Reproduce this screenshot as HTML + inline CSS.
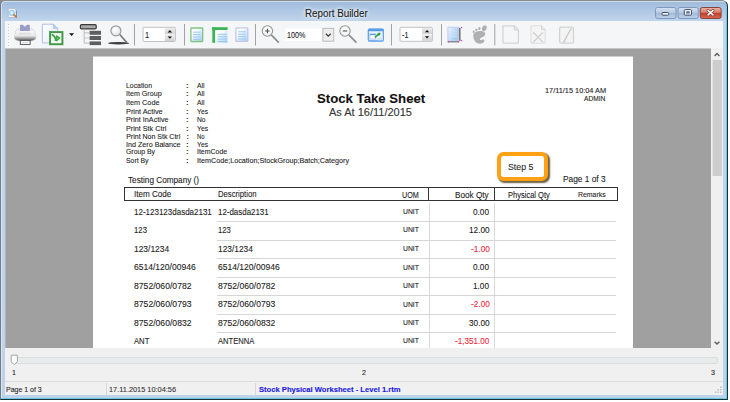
<!DOCTYPE html>
<html><head><meta charset="utf-8">
<style>
*{margin:0;padding:0;box-sizing:border-box}
html,body{width:730px;height:402px;overflow:hidden;background:#fff}
#corner{left:0;top:0;width:6px;height:6px;background:#8c8c8c}
body{font-family:"Liberation Sans",sans-serif;position:relative}
.abs{position:absolute}
.t{-webkit-text-stroke:.1px currentColor;position:absolute;white-space:nowrap;transform-origin:0 50%;line-height:1}
.tr{position:absolute;white-space:nowrap;transform-origin:100% 50%;line-height:1;text-align:right}
#win{left:0;top:0;width:728px;height:400px;background:linear-gradient(#9fbbdb 0,#a9c3e0 6px,#c1d6ed 21px,#bdd3ec 100%);border-radius:5px 6px 0 0;border:1px solid #8c8c8c;border-left-color:#767c7e;border-right-color:#1a343c;border-bottom-color:#1a343c;box-shadow:inset -1px -1px 0 #6cc4de,inset 1px 1px 0 rgba(235,245,255,.6)}
#client{left:5px;top:21px;width:718px;height:374px;background:#f0f0f0}
#toolbar{left:5px;top:21px;width:718px;height:27px;background:#f5f6f7}
#gray{left:5px;top:48px;width:706px;height:300px;background:#a0a0a0}
#paper{left:93px;top:56px;width:540px;height:292px;background:#fff}
#vscroll{left:711px;top:48px;width:12px;height:300px;background:#f0f0f0}
.hl{left:217px;width:399px;height:1px;background:#d6d6d6}
</style></head><body>
<div id="corner" class="abs"></div><div id="win" class="abs"></div>
<div id="client" class="abs"></div>
<div id="toolbar" class="abs"></div>
<div id="gray" class="abs"></div>
<div id="paper" class="abs"></div>
<div id="vscroll" class="abs"></div>
<div class="abs" style="left:5px;top:48px;width:706px;height:1px;background:#c6c6c7"></div>
<div class="abs" style="left:93px;top:56px;width:540px;height:1px;background:#cfcfcf"></div>
<div class="abs" style="left:5px;top:49px;width:1px;height:299px;background:#abb6c2"></div>
<!-- table header box -->
<div class="abs" style="left:124.4px;top:187px;width:493.7px;height:13.5px;border:1.2px solid #333"></div>
<div class="abs" style="left:427.9px;top:187.5px;width:1.2px;height:12.6px;background:#383838"></div>
<div class="abs" style="left:493.9px;top:187.5px;width:1.2px;height:12.6px;background:#383838"></div>
<!-- body vertical lines -->
<div class="abs" style="left:429px;top:203px;width:1px;height:145px;background:#dadada"></div>
<div class="abs" style="left:494px;top:203px;width:1px;height:145px;background:#dadada"></div>
<!-- row lines -->
<div class="abs hl" style="top:221px"></div>
<div class="abs hl" style="top:239.5px"></div>
<div class="abs hl" style="top:258px"></div>
<div class="abs hl" style="top:276.5px"></div>
<div class="abs hl" style="top:295px"></div>
<div class="abs hl" style="top:313.5px"></div>
<div class="abs hl" style="top:332px"></div>
<!-- callout -->
<div class="abs" style="left:496.5px;top:151.8px;width:51px;height:29px;border:4.4px solid #ffa112;border-radius:6.5px;background:#fff;box-shadow:1.3px 1.6px 1.6px rgba(70,55,20,.8)"></div>

<svg class="abs" style="left:0;top:0" width="730" height="402" viewBox="0 0 730 402">
<defs>
<linearGradient id="gPg" x1="0" y1="0" x2="1" y2="1"><stop offset="0" stop-color="#ffffff"/><stop offset=".3" stop-color="#ffffff"/><stop offset="1" stop-color="#a4cdf3"/></linearGradient>
<linearGradient id="gDoc" x1="0" y1="0" x2="1" y2="1"><stop offset="0" stop-color="#ffffff"/><stop offset="1" stop-color="#e6eefb"/></linearGradient>
<linearGradient id="gPr" x1="0" y1="0" x2="0" y2="1"><stop offset="0" stop-color="#e2e2e2"/><stop offset=".2" stop-color="#f5f5f5"/><stop offset=".55" stop-color="#e9e9e9"/><stop offset=".66" stop-color="#c6c6c6"/><stop offset=".88" stop-color="#727272"/><stop offset="1" stop-color="#4a4a4a"/></linearGradient>
<radialGradient id="gLens" cx=".4" cy=".35" r=".7"><stop offset="0" stop-color="#ffffff"/><stop offset="1" stop-color="#e2e2e2"/></radialGradient>
<linearGradient id="gBtn" x1="0" y1="0" x2="0" y2="1"><stop offset="0" stop-color="#d6e2f2"/><stop offset=".45" stop-color="#b7cbe4"/><stop offset=".5" stop-color="#a0b9d8"/><stop offset="1" stop-color="#bed2ea"/></linearGradient>
<linearGradient id="gCls" x1="0" y1="0" x2="0" y2="1"><stop offset="0" stop-color="#efb4a6"/><stop offset=".45" stop-color="#d97a66"/><stop offset=".5" stop-color="#c33c24"/><stop offset="1" stop-color="#da6a52"/></linearGradient>
<linearGradient id="gSp" x1="0" y1="0" x2="0" y2="1"><stop offset="0" stop-color="#ececec"/><stop offset="1" stop-color="#d2d2d2"/></linearGradient>
<linearGradient id="gPm" x1="0" y1="0" x2="1" y2=".6"><stop offset="0" stop-color="#eef5fd"/><stop offset="1" stop-color="#9fcbf2"/></linearGradient>
</defs>
<!-- title icon -->
<g id="ticon">
<path d="M8.3,8.4 H14.2 L16.3,10.5 V17.5 H8.3 Z" fill="#f1f3fa" stroke="#a8b4cc" stroke-width=".7"/>
<line x1="16.4" y1="10.6" x2="16.4" y2="17.2" stroke="#6e7da6" stroke-width=".9"/>
<circle cx="11.8" cy="12.9" r="2.7" fill="#b9e0fb" stroke="#86b6e2" stroke-width=".7"/>
<circle cx="11.5" cy="12.6" r="1.2" fill="#e4f4fe"/>
<line x1="13.9" y1="14.9" x2="16.1" y2="16.9" stroke="#c2803a" stroke-width="1.9" stroke-linecap="round"/>
</g>
<!-- window buttons -->
<rect x="655.5" y="7.5" width="20.5" height="11" rx="2" fill="url(#gBtn)" stroke="#8098bc" stroke-width="1"/>
<rect x="661.9" y="12.5" width="6.8" height="2.7" rx="1" fill="#f4f6fa" stroke="#3f4d68" stroke-width="1"/>
<rect x="678" y="7.5" width="20.3" height="11" rx="2" fill="url(#gBtn)" stroke="#8098bc" stroke-width="1"/>
<rect x="684.3" y="9.6" width="7.2" height="5.5" rx="1" fill="#f8fafc" stroke="#3f4d68" stroke-width="1"/>
<rect x="686.2" y="11.3" width="3.5" height="2.2" fill="#506a98"/>
<rect x="700.3" y="7.5" width="20.8" height="11" rx="2" fill="url(#gCls)" stroke="#84453c" stroke-width="1"/>
<g stroke-linecap="round"><path d="M708,10.5 L713,14.8 M713,10.5 L708,14.8" stroke="#6a3a36" stroke-width="2.8"/><path d="M708,10.5 L713,14.8 M713,10.5 L708,14.8" stroke="#fff" stroke-width="1.6"/></g>

<!-- toolbar grip -->
<line x1="8.5" y1="24" x2="8.5" y2="47" stroke="#cdcdcd" stroke-width="1" stroke-dasharray="1 2"/>
<!-- printer -->
<g id="printer">
<path d="M15,33.2 C15,30 18,28.6 21,28.6 H29.2 C32.2,28.6 35.3,30 35.3,33.2 L35.9,37.6 C35.9,40.1 33,41.3 25.2,41.3 C17.4,41.3 14.4,40.1 14.4,37.6 Z" fill="url(#gPr)" stroke="#c8c8c8" stroke-width=".5"/>
<path d="M20,31 V25.5 Q20,24.7 20.8,24.7 H22.8 L24.9,26.7 L27,24.7 H29 Q29.8,24.7 29.8,25.5 V31 Z" fill="#9c9cca"/>
<rect x="19" y="32.8" width="12.2" height="1.7" rx=".8" fill="#dedede"/>
<rect x="20.3" y="40.4" width="9.8" height="4" fill="#fdfdfd" stroke="#4c4c4c" stroke-width=".9"/>
<rect x="21.8" y="41.9" width="6.8" height=".9" fill="#d8d8d8"/>
</g>
<!-- doc + green -->
<g id="docg">
<path d="M42.4,24.2 H53.3 L57.8,28.6 V43 H42.4 Z" fill="url(#gDoc)" stroke="#b2bbe8" stroke-width="1"/>
<path d="M53.3,24.2 V28.6 H57.8 Z" fill="#a9d8f5" stroke="#a9b6e2" stroke-width=".6"/>
<rect x="50.1" y="32.1" width="12.3" height="12.1" fill="#f6fbf6" stroke="#459a47" stroke-width="2"/>
<path d="M52.4,34.9 Q54.6,36 55.7,38.8" fill="none" stroke="#3da447" stroke-width="1.9" stroke-linecap="round"/>
<path d="M56.4,35 L60.8,38.1 L56.7,41.5 L54.4,40.5 L55.4,38.3 Z" fill="#3aa545"/>
<circle cx="57.7" cy="38.3" r=".9" fill="#6ed56e"/>
</g>
<path d="M69.1,33.2 H74.1 L71.6,35.9 Z" fill="#111"/>
<!-- tree -->
<g id="tree">
<rect x="80.4" y="24.6" width="15.8" height="4.3" rx="1.2" fill="#a9a9a9" stroke="#3a3a3a" stroke-width="1.2"/>
<path d="M84.2,29.5 V43.4 M84.2,32.8 H89.5 M84.2,38 H89.5 M84.2,43.2 H89.5" stroke="#c6c6c6" stroke-width="1.2" fill="none"/>
<rect x="89.6" y="30.8" width="11.4" height="4" fill="#5e5e5e"/>
<rect x="89.6" y="36" width="11.4" height="4" fill="#5e5e5e"/>
<rect x="89.6" y="41.4" width="11.4" height="3.7" fill="#5e5e5e"/>
</g>
<!-- find magnifier -->
<g id="find">
<ellipse cx="118.6" cy="43.2" rx="10.6" ry="1.3" fill="#3e3e3e"/>
<line x1="119.8" y1="34.5" x2="126.8" y2="42.6" stroke="#7c7c7c" stroke-width="1.7"/>
<circle cx="115.9" cy="30.8" r="5" fill="url(#gLens)" stroke="#9c9c9c" stroke-width="1.2"/>
</g>
<!-- separators -->
<g fill="#a2a2a2">
<rect x="134" y="24" width="1" height="21.5"/><rect x="184" y="24" width="1" height="21.5"/><rect x="255" y="24" width="1" height="21.5"/>
<rect x="391" y="24" width="1" height="21.5"/><rect x="441" y="24" width="1" height="21.5"/><rect x="494.3" y="24" width="1" height="21.5"/>
</g>
<!-- spin 1 -->
<g id="spin1">
<rect x="143" y="27.3" width="32.4" height="14.2" rx="1" fill="#fff" stroke="#c2c2c2" stroke-width="1"/>
<rect x="164.8" y="28" width="10" height="6.3" fill="url(#gSp)"/><rect x="164.8" y="34.8" width="10" height="6.2" fill="url(#gSp)"/>
<path d="M167.7,32.4 H172 L169.85,30.1 Z M167.7,36.4 H172 L169.85,38.7 Z" fill="#111"/>
</g>
<!-- page icons -->
<g id="pg1">
<rect x="190.9" y="28" width="11.8" height="13.5" rx=".7" fill="url(#gPg)" stroke="#7cc47f" stroke-width="1.3"/>
<path d="M193,32.2 H200.7 M193,34.6 H200.7 M193,37 H200.7 M193,39.4 H200.7" stroke="#9cc9f2" stroke-width="1"/>
</g>
<g id="pg2">
<rect x="212.3" y="27.2" width="15.3" height="3" fill="#3db556"/><rect x="212.3" y="27.2" width="3" height="15.6" fill="#3db556"/>
<rect x="215.3" y="30.2" width="12.3" height="12.6" fill="url(#gPg)"/>
<path d="M217.5,34.3 H226.7 M217.5,36.7 H226.7 M217.5,39.1 H226.7 M217.5,41.5 H226.7" stroke="#9cc9f2" stroke-width="1"/>
</g>
<g id="pg3">
<rect x="235.9" y="27.8" width="11.9" height="13.6" rx=".7" fill="url(#gPg)" stroke="#c3c7ea" stroke-width="1.3"/>
<path d="M238,31.8 H245.8 M238,34.2 H245.8 M238,36.6 H245.8 M238,39 H245.8" stroke="#9cc9f2" stroke-width="1"/>
</g>
<!-- zoom in -->
<g id="zin">
<line x1="271.2" y1="34.9" x2="278.8" y2="42.6" stroke="#8e8e8e" stroke-width="1.65"/>
<circle cx="267.4" cy="31" r="5.2" fill="#f8f8f8" stroke="#959595" stroke-width="1.1"/>
<path d="M265.2,31 H269.6 M267.4,28.8 V33.2" stroke="#505050" stroke-width="1.05"/>
</g>
<!-- combo -->
<rect x="285.3" y="28.4" width="37.6" height="12.6" fill="#fff"/>
<rect x="322.9" y="28.4" width="10.8" height="12.8" fill="#ededed" stroke="#bcbcbc" stroke-width="1"/>
<path d="M325.9,33.8 L328.3,36.2 L330.7,33.8" fill="none" stroke="#3c3c3c" stroke-width="1.25"/>
<!-- zoom out -->
<g id="zout">
<line x1="348.9" y1="34.9" x2="356.4" y2="42.6" stroke="#8e8e8e" stroke-width="1.65"/>
<circle cx="345" cy="31" r="5.2" fill="#f8f8f8" stroke="#959595" stroke-width="1.1"/>
<path d="M342.8,31 H347.2" stroke="#666" stroke-width="1.2"/>
</g>
<!-- blue window icon -->
<g id="bwin">
<rect x="368.3" y="29.2" width="15" height="12" rx="1.4" fill="#eaf2fc" stroke="#5a9ce8" stroke-width="1.2"/>
<rect x="367.9" y="28.8" width="15.8" height="2.4" rx="1" fill="#5a9ce8"/>
<rect x="368.3" y="40" width="15" height="1.6" fill="#7db2ee"/>
<rect x="377.2" y="37.6" width="5.6" height="2.6" fill="#d3e4f9"/>
<rect x="370" y="34.2" width="5.8" height="4.8" fill="#fff" stroke="#8cbaf0" stroke-width=".7"/>
<rect x="369.7" y="33.8" width="6.4" height="1.3" fill="#5a9ce8"/>
<line x1="374.8" y1="37.4" x2="378.4" y2="34.4" stroke="#2fa53a" stroke-width="1.5"/>
<ellipse cx="379" cy="34" rx="1.6" ry="1.4" fill="#2fa53a" transform="rotate(-40 379 34)"/>
</g>
<!-- spin 2 -->
<g id="spin2">
<rect x="400" y="27.3" width="32.4" height="14" rx="1" fill="#fff" stroke="#c2c2c2" stroke-width="1"/>
<rect x="422" y="28" width="10" height="6.2" fill="url(#gSp)"/><rect x="422" y="34.7" width="10" height="6.1" fill="url(#gSp)"/>
<path d="M424.9,32.3 H429.2 L427.05,30 Z M424.9,36.3 H429.2 L427.05,38.6 Z" fill="#111"/>
</g>
<!-- page measure icon -->
<g id="pmeas">
<rect x="447.9" y="27.3" width="10.2" height="13.8" fill="url(#gPm)" stroke="#c6caee" stroke-width="1"/>
<path d="M449.5,31.5 H457 M449.5,34 H457 M449.5,36.5 H457" stroke="#cfe4f8" stroke-width=".8"/>
<rect x="458.8" y="27.8" width="1.8" height="13" fill="#787878"/>
<rect x="448" y="41.2" width="10.8" height="1.2" fill="#787878"/>
<rect x="460.9" y="26.9" width="1.3" height="1.3" fill="#d23fd2"/><rect x="460.9" y="39.9" width="1.3" height="1.3" fill="#d23fd2"/><rect x="447.6" y="41.1" width="1.3" height="1.3" fill="#d23fd2"/><rect x="458" y="41.1" width="1.3" height="1.3" fill="#d23fd2"/>
</g>
<!-- foot -->
<g id="foot" fill="#b0b0b0">
<ellipse cx="484.3" cy="28.2" rx="2.2" ry="3" transform="rotate(28 484.3 28.2)"/>
<ellipse cx="479.4" cy="28.5" rx="1.2" ry="1.6" transform="rotate(15 479.4 28.5)"/>
<ellipse cx="476.3" cy="29.9" rx="1.1" ry="1.4" transform="rotate(5 476.3 29.9)"/>
<ellipse cx="473.7" cy="31.7" rx="1" ry="1.3"/>
<path d="M473.3,35.5 C473.2,32.6 477,31 480.5,31 C483.6,31 485.6,32.4 485.2,34.6 C484.8,36.8 482,37.2 480.4,38.3 C479.2,39.2 480,40.5 481.6,39.9 C483.2,39.3 484.6,39.6 484.4,41.1 C484.1,43.2 480.6,44 478.2,43.5 C474.8,42.8 473.4,39 473.3,35.5 Z"/>
</g>
<!-- disabled icons -->
<g id="dis1"><path d="M503,25.8 H514.3 L518.4,29.9 V42 Q518.4,43.2 517.2,43.2 H504.2 Q503,43.2 503,42 Z" fill="#f6f6f6" stroke="#d4d4d4" stroke-width="1.3"/><path d="M514.3,25.8 V29.9 H518.4" fill="none" stroke="#cfcfcf" stroke-width="1"/></g>
<g id="dis2"><path d="M531,25.8 H541.6 L545.2,29.4 V43.2 H531 Z" fill="#f4f4f4" stroke="#dedede" stroke-width="1"/><path d="M541.6,25.8 V29.4 H545.2" fill="none" stroke="#d2d2d2" stroke-width="1"/><path d="M533.3,32.4 L543,42.2 M543,32.4 L533.3,42.2" stroke="#cccccc" stroke-width="1.2"/></g>
<g id="dis3"><rect x="559.6" y="27.2" width="13.9" height="15.9" rx="1.6" fill="#f4f4f4" stroke="#d3d3d3" stroke-width="1.3"/><line x1="571.3" y1="28.2" x2="563.4" y2="42.6" stroke="#c8c8c8" stroke-width="1.3"/></g>

<!-- scrollbar -->
<rect x="712.6" y="60" width="9.3" height="116" fill="#cdcdcd"/>
<path d="M714.6,55.9 L717,53.5 L719.4,55.9" fill="none" stroke="#5a5a5a" stroke-width="1.35"/>
<path d="M714.6,341.7 L717,344.1 L719.4,341.7" fill="none" stroke="#5a5a5a" stroke-width="1.35"/>
<!-- slider -->
<rect x="11.5" y="357.5" width="706" height="6" rx="1" fill="#e8ebeb" stroke="#dadddd" stroke-width="1"/>
<path d="M11.2,355.2 H17.4 V361.6 L14.3,364.7 L11.2,361.6 Z" fill="#fbfbfb" stroke="#a6a6a6" stroke-width="1"/>
<!-- status bar -->
<rect x="5" y="381" width="718" height="1" fill="#dcdcdc"/>
<rect x="106" y="383" width="1" height="12" fill="#d9d9d9"/><rect x="255" y="383" width="1" height="12" fill="#d9d9d9"/>
<g fill="#bdbdbd"><rect x="720" y="391.5" width="1.4" height="1.4"/><rect x="717.5" y="391.5" width="1.4" height="1.4"/><rect x="720" y="389" width="1.4" height="1.4"/><rect x="715" y="391.5" width="1.4" height="1.4"/><rect x="717.5" y="389" width="1.4" height="1.4"/><rect x="720" y="386.5" width="1.4" height="1.4"/></g>
</svg>

<div class="t" style="left:126.20px;top:81.74px;font-size:8px;color:#222;transform:scaleX(0.8585);">Location</div>
<div class="t" style="left:185.90px;top:81.74px;font-size:8px;color:#333;font-weight:bold;">:</div>
<div class="t" style="left:197.00px;top:81.74px;font-size:8px;color:#222;transform:scaleX(0.8400);">All</div>
<div class="t" style="left:126.20px;top:90.34px;font-size:8px;color:#222;transform:scaleX(0.8893);">Item Group</div>
<div class="t" style="left:185.90px;top:90.34px;font-size:8px;color:#333;font-weight:bold;">:</div>
<div class="t" style="left:197.00px;top:90.34px;font-size:8px;color:#222;transform:scaleX(0.8400);">All</div>
<div class="t" style="left:126.20px;top:98.84px;font-size:8px;color:#222;transform:scaleX(0.9065);">Item Code</div>
<div class="t" style="left:185.90px;top:98.84px;font-size:8px;color:#333;font-weight:bold;">:</div>
<div class="t" style="left:197.00px;top:98.84px;font-size:8px;color:#222;transform:scaleX(0.8400);">All</div>
<div class="t" style="left:126.20px;top:107.54px;font-size:8px;color:#222;transform:scaleX(0.9160);">Print Active</div>
<div class="t" style="left:185.90px;top:107.54px;font-size:8px;color:#333;font-weight:bold;">:</div>
<div class="t" style="left:197.00px;top:107.54px;font-size:8px;color:#222;transform:scaleX(0.8462);">Yes</div>
<div class="t" style="left:126.20px;top:116.14px;font-size:8px;color:#222;transform:scaleX(0.9020);">Print InActive</div>
<div class="t" style="left:185.90px;top:116.14px;font-size:8px;color:#333;font-weight:bold;">:</div>
<div class="t" style="left:197.00px;top:116.14px;font-size:8px;color:#222;transform:scaleX(0.8400);">No</div>
<div class="t" style="left:126.20px;top:124.54px;font-size:8px;color:#222;transform:scaleX(0.8992);">Print Stk Ctrl</div>
<div class="t" style="left:185.90px;top:124.54px;font-size:8px;color:#333;font-weight:bold;">:</div>
<div class="t" style="left:197.00px;top:124.54px;font-size:8px;color:#222;transform:scaleX(0.8462);">Yes</div>
<div class="t" style="left:126.20px;top:133.43px;font-size:7px;color:#222;">Print Non Stk Ctrl</div>
<div class="t" style="left:186.40px;top:133.43px;font-size:7px;color:#333;font-weight:bold;">:</div>
<div class="t" style="left:197.00px;top:133.43px;font-size:7px;color:#222;transform:scaleX(0.8400);">No</div>
<div class="t" style="left:126.20px;top:140.84px;font-size:8px;color:#222;transform:scaleX(0.8941);">Ind Zero Balance</div>
<div class="t" style="left:185.90px;top:140.84px;font-size:8px;color:#333;font-weight:bold;">:</div>
<div class="t" style="left:197.00px;top:140.84px;font-size:8px;color:#222;transform:scaleX(0.8462);">Yes</div>
<div class="t" style="left:126.20px;top:148.44px;font-size:8px;color:#222;transform:scaleX(0.8582);">Group By</div>
<div class="t" style="left:185.90px;top:148.44px;font-size:8px;color:#333;font-weight:bold;">:</div>
<div class="t" style="left:197.00px;top:148.44px;font-size:8px;color:#222;transform:scaleX(0.8704);">ItemCode</div>
<div class="t" style="left:126.20px;top:156.64px;font-size:8px;color:#222;transform:scaleX(0.8585);">Sort By</div>
<div class="t" style="left:185.90px;top:156.64px;font-size:8px;color:#333;font-weight:bold;">:</div>
<div class="t" style="left:197.00px;top:156.64px;font-size:8px;color:#222;transform:scaleX(0.9000);">ItemCode;Location;StockGroup;Batch;Category</div>
<div class="t" style="left:316.95px;top:91.60px;font-size:13px;color:#111;font-weight:bold;transform:scaleX(1.0144);">Stock Take Sheet</div>
<div class="t" style="left:329.00px;top:106.68px;font-size:11px;color:#333;">As At 16/11/2015</div>
<div class="t" style="left:545.30px;top:87.04px;font-size:7.8px;color:#222;transform:scaleX(0.9412);">17/11/15 10:04 AM</div>
<div class="t" style="left:584.30px;top:95.33px;font-size:7px;color:#222;transform:scaleX(0.9487);">ADMIN</div>
<div class="t" style="left:128.00px;top:175.85px;font-size:9px;color:#222;transform:scaleX(0.9103);">Testing Company ()</div>
<div class="t" style="left:563.20px;top:175.25px;font-size:9px;color:#222;transform:scaleX(0.9255);">Page 1 of 3</div>
<div class="t" style="left:507.80px;top:161.86px;font-size:9.6px;color:#2a2a2a;transform:scaleX(0.9158);">Step 5</div>
<div class="t" style="left:134.20px;top:190.35px;font-size:9px;color:#222;transform:scaleX(0.8982);">Item Code</div>
<div class="t" style="left:217.90px;top:190.35px;font-size:9px;color:#222;transform:scaleX(0.8547);">Description</div>
<div class="t" style="left:402.00px;top:190.60px;font-size:8.5px;color:#222;transform:scaleX(0.8500);">UOM</div>
<div class="t" style="left:455.00px;top:190.95px;font-size:9px;color:#222;transform:scaleX(0.9074);">Book Qty</div>
<div class="t" style="left:507.50px;top:190.60px;font-size:8.5px;color:#222;transform:scaleX(0.8846);">Physical Qty</div>
<div class="t" style="left:578.00px;top:191.09px;font-size:7.5px;color:#222;transform:scaleX(0.9214);">Remarks</div>
<div class="t" style="left:134.40px;top:208.25px;font-size:9px;color:#222;transform:scaleX(0.8884);">12-123123dasda2131</div>
<div class="t" style="left:217.80px;top:208.25px;font-size:9px;color:#222;transform:scaleX(0.8808);">12-dasda2131</div>
<div class="t" style="left:402.50px;top:208.39px;font-size:7.5px;color:#222;transform:scaleX(0.9090);">UNIT</div>
<div class="t" style="left:473.00px;top:208.25px;font-size:9px;color:#222;transform:scaleX(0.9147);">0.00</div>
<div class="t" style="left:134.40px;top:226.35px;font-size:9px;color:#222;transform:scaleX(0.8627);">123</div>
<div class="t" style="left:217.80px;top:226.35px;font-size:9px;color:#222;transform:scaleX(0.8512);">123</div>
<div class="t" style="left:402.50px;top:226.49px;font-size:7.5px;color:#222;transform:scaleX(0.9090);">UNIT</div>
<div class="t" style="left:469.00px;top:226.35px;font-size:9px;color:#222;transform:scaleX(0.9130);">12.00</div>
<div class="t" style="left:134.40px;top:244.75px;font-size:9px;color:#222;transform:scaleX(0.9353);">123/1234</div>
<div class="t" style="left:217.80px;top:244.75px;font-size:9px;color:#222;transform:scaleX(0.9306);">123/1234</div>
<div class="t" style="left:402.50px;top:244.89px;font-size:7.5px;color:#222;transform:scaleX(0.9090);">UNIT</div>
<div class="t" style="left:471.00px;top:244.75px;font-size:9px;color:#f0283f;transform:scaleX(0.9220);">-1.00</div>
<div class="t" style="left:134.40px;top:263.45px;font-size:9px;color:#222;transform:scaleX(0.9472);">6514/120/00946</div>
<div class="t" style="left:217.80px;top:263.45px;font-size:9px;color:#222;transform:scaleX(0.9483);">6514/120/00946</div>
<div class="t" style="left:402.50px;top:263.59px;font-size:7.5px;color:#222;transform:scaleX(0.9090);">UNIT</div>
<div class="t" style="left:473.00px;top:263.45px;font-size:9px;color:#222;transform:scaleX(0.9147);">0.00</div>
<div class="t" style="left:134.40px;top:281.55px;font-size:9px;color:#222;transform:scaleX(0.9577);">8752/060/0782</div>
<div class="t" style="left:217.80px;top:281.55px;font-size:9px;color:#222;transform:scaleX(0.9547);">8752/060/0782</div>
<div class="t" style="left:402.50px;top:281.69px;font-size:7.5px;color:#222;transform:scaleX(0.9090);">UNIT</div>
<div class="t" style="left:473.00px;top:281.55px;font-size:9px;color:#222;transform:scaleX(0.9147);">1.00</div>
<div class="t" style="left:134.40px;top:300.45px;font-size:9px;color:#222;transform:scaleX(0.9577);">8752/060/0793</div>
<div class="t" style="left:217.80px;top:300.45px;font-size:9px;color:#222;transform:scaleX(0.9547);">8752/060/0793</div>
<div class="t" style="left:402.50px;top:300.59px;font-size:7.5px;color:#222;transform:scaleX(0.9090);">UNIT</div>
<div class="t" style="left:471.00px;top:300.45px;font-size:9px;color:#f0283f;transform:scaleX(0.9220);">-2.00</div>
<div class="t" style="left:134.40px;top:318.95px;font-size:9px;color:#222;transform:scaleX(0.9577);">8752/060/0832</div>
<div class="t" style="left:217.80px;top:318.95px;font-size:9px;color:#222;transform:scaleX(0.9547);">8752/060/0832</div>
<div class="t" style="left:402.50px;top:319.09px;font-size:7.5px;color:#222;transform:scaleX(0.9090);">UNIT</div>
<div class="t" style="left:469.00px;top:318.95px;font-size:9px;color:#222;transform:scaleX(0.9130);">30.00</div>
<div class="t" style="left:134.40px;top:336.95px;font-size:9px;color:#222;transform:scaleX(0.8535);">ANT</div>
<div class="t" style="left:217.80px;top:336.95px;font-size:9px;color:#222;transform:scaleX(0.8419);">ANTENNA</div>
<div class="t" style="left:402.50px;top:337.09px;font-size:7.5px;color:#222;transform:scaleX(0.9090);">UNIT</div>
<div class="t" style="left:455.00px;top:336.95px;font-size:9px;color:#f0283f;transform:scaleX(0.9006);">-1,351.00</div>
<div class="t" style="left:304.90px;top:8.42px;font-size:10.5px;color:#1c1c1c;transform:scaleX(0.9339);text-shadow:0 0 4px #fff,0 0 6px #fff">Report Builder</div>
<div class="t" style="left:6.20px;top:385.84px;font-size:8px;color:#222;transform:scaleX(0.8720);">Page 1 of 3</div>
<div class="t" style="left:109.30px;top:385.84px;font-size:8px;color:#333;transform:scaleX(0.9203);">17.11.2015 10:04:56</div>
<div class="t" style="left:258.60px;top:385.74px;font-size:7.8px;color:#1818e0;font-weight:bold;transform:scaleX(0.9756);">Stock Physical Worksheet - Level 1.rtm</div>
<div class="t" style="left:12.40px;top:369.24px;font-size:8px;color:#222;transform:scaleX(0.8800);">1</div>
<div class="t" style="left:362.25px;top:368.84px;font-size:8px;color:#222;transform:scaleX(0.8800);">2</div>
<div class="t" style="left:711.05px;top:368.84px;font-size:8px;color:#222;transform:scaleX(0.8800);">3</div>
<div class="t" style="left:144.95px;top:30.70px;font-size:8.5px;color:#222;transform:scaleX(0.8800);">1</div>
<div class="t" style="left:287.40px;top:30.80px;font-size:8.5px;color:#222;transform:scaleX(0.8400);">100%</div>
<div class="t" style="left:402.30px;top:30.70px;font-size:8.5px;color:#222;transform:scaleX(0.8400);">-1</div>
</body></html>
